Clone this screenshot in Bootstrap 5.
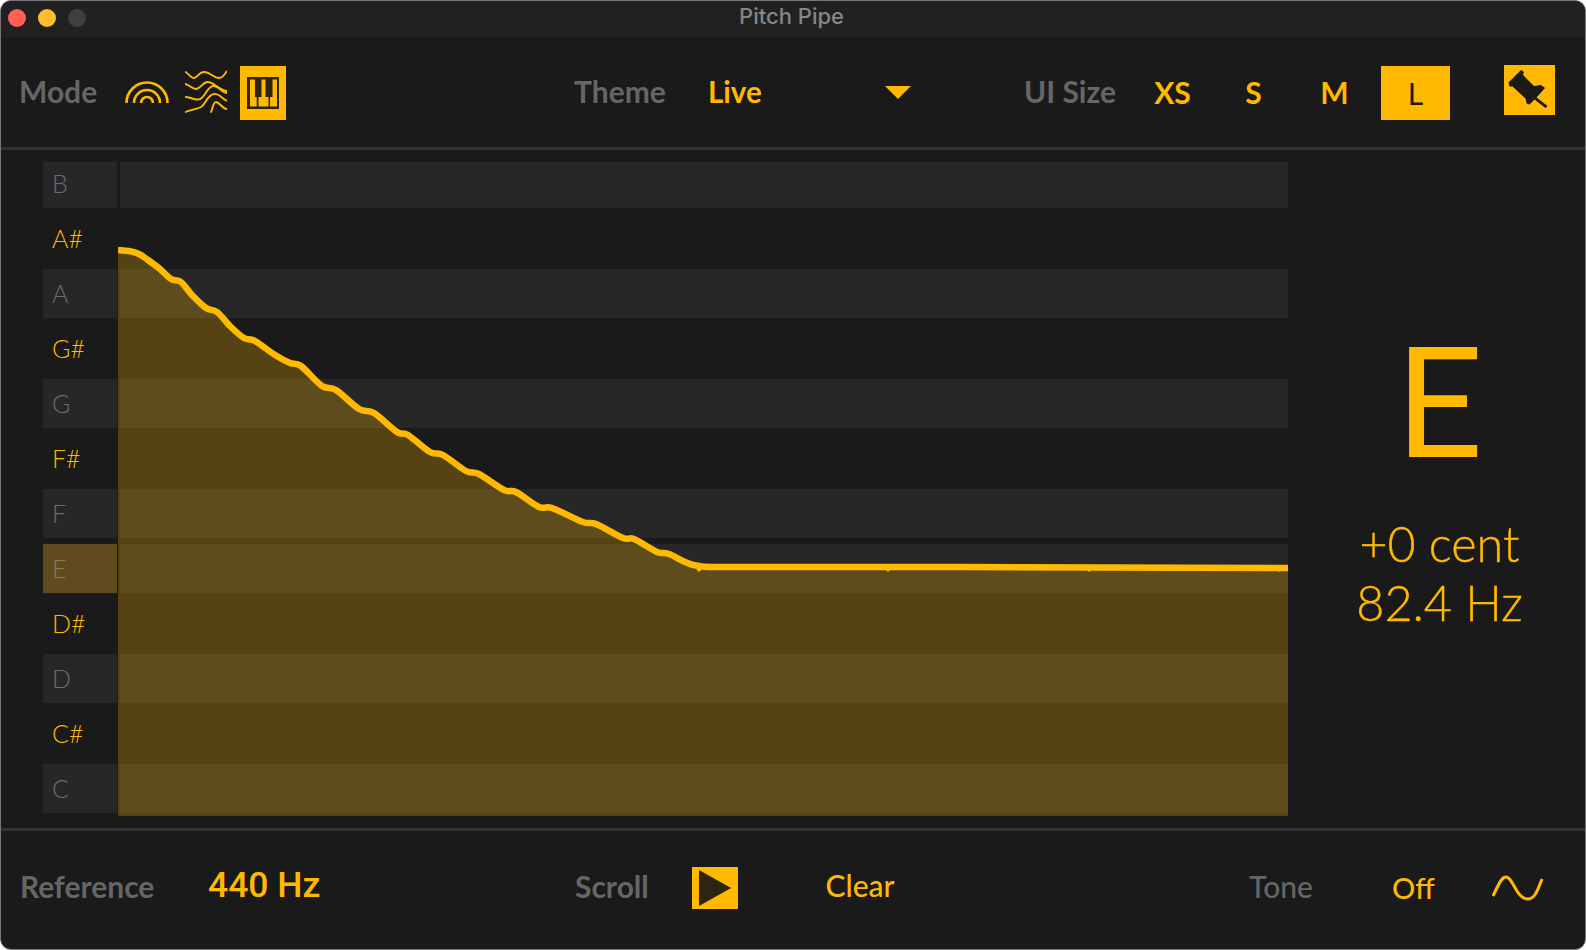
<!DOCTYPE html>
<html lang="en">
<head>
  <meta charset="UTF-8">
  <title>Pitch Pipe</title>
  <link href="https://cdn.jsdelivr.net/npm/bootstrap@5.3.3/dist/css/bootstrap.min.css" rel="stylesheet">
  <style>
    html, body { height: 100%; background: #fff; }
    body { font-family: "Lato", "Liberation Sans", sans-serif; overflow: hidden; }

    .pipe-window { height: 950px; background: #1a1a1a; border: 1px solid #777; border-radius: 11px; overflow: hidden; }

    .title-bar { height: 36px; background: #212121; padding-bottom: 3px; }
    .title-side { flex: 1 1 0; padding-left: 7px; gap: 12px; }
    .light { width: 18px; height: 18px; border-radius: 50%; margin-top: 1px; }
    .light-red { background: #ff5f57; }
    .light-yellow { background: #febc2e; }
    .light-off { background: #3f3f3f; }
    .title-text { font-family: "Inter", "Liberation Sans", sans-serif; font-size: 22px; font-weight: 500; color: #868686; line-height: 1; padding-right: 3px; margin-bottom: 4px; }

    .tool-bar { height: 110px; padding-left: 18px; }
    .foot-bar { height: 118px; padding-left: 19px; padding-bottom: 4px; }
    .rule { height: 3px; background: #333; flex: none; }

    .field-name { font-size: 30px; font-weight: 700; color: #666; line-height: 1; white-space: nowrap; flex: none; }
    .amber-text { font-size: 30px; font-weight: 700; color: #ffb900; line-height: 1; white-space: nowrap; flex: none; }
    .tool-bar .field-name { margin-bottom: 2px; }
    .foot-bar .field-name { margin-bottom: 4px; }

    .group-mode { width: 555px; }
    .group-theme { width: 450px; }
    .name-mode { width: 106px; }
    .name-theme { width: 134px; }
    .name-size { width: 114px; }
    .live-value { width: 177px; font-size: 29.5px; }
    .wave-icon { margin-left: 16px; margin-right: 13px; }

    .tool-btn { --bs-btn-padding-x: 0; --bs-btn-padding-y: 0; --bs-btn-border-width: 0; --bs-btn-border-radius: 0; --bs-btn-color: #ffb900; --bs-btn-hover-color: #ffb900; font-family: inherit; font-size: 30px; font-weight: 700; line-height: 1; display: flex; align-items: center; justify-content: center; flex: none; }
    .tool-on { background: #ffb900; color: #1f1c14; }
    .tool-on:hover { background: #ffb900; color: #1f1c14; }
    .size-btn { width: 69px; height: 54px; margin-right: 12px; margin-top: 2px; padding-bottom: 2px; }
    .size-btn.tool-on { font-weight: 400; margin-right: 0; padding-bottom: 0; }
    .piano-btn { width: 46px; height: 54px; margin-top: 2px; }
    .pin-btn { width: 51px; height: 50px; margin-left: 54px; margin-bottom: 4px; }

    .chart-area { flex: 1 1 0; min-height: 0; }
    .chart-col { width: 1245px; margin-left: 42px; margin-top: 12px; height: 654px; flex: none; }
    .note-row { height: 61px; }
    .note-row.is-natural { height: 49px; }
    .note-row.is-top { height: 46px; }
    .note-row.is-top .note-name { padding-bottom: 3px; }
    .note-row.is-e { margin-top: 6px; }
    .note-name { width: 74px; padding-left: 9px; font-size: 25px; font-weight: 300; line-height: 1; color: #ffb900; display: flex; align-items: center; flex: none; }
    .note-band { flex: 1 1 0; margin-left: 3px; }
    .is-natural .note-name { background: #272727; color: #6c6c6c; }
    .is-natural .note-band { background: #272727; }
    .is-natural.is-current .note-name { background: #5f4b1e; color: #8a7a55; }
    .curve-layer { position: absolute; left: 75px; top: 0; }

    .read-col { flex: 1 1 0; padding-left: 6px; padding-top: 171px; color: #ffb900; }
    .big-note { font-size: 154px; font-weight: 400; line-height: 1; height: 154px; }
    .read-line { font-size: 48.5px; font-weight: 300; line-height: 59px; white-space: nowrap; -webkit-text-stroke: 0.4px #ffb900; }
    .read-first { margin-top: 39px; }

    .name-reference { width: 188px; }
    .ref-value { font-family: "Roboto", "Liberation Sans", sans-serif; font-size: 35.5px; font-weight: 500; width: 367px; margin-bottom: 5px; }
    .name-scroll { width: 117px; }
    .play-btn { width: 46px; height: 42px; }
    .clear-btn { margin-left: 89px; width: 66px; font-size: 30px; font-weight: 500; margin-bottom: 6px; }
    .group-scroll { width: 674px; }
    .name-tone { width: 143px; font-weight: 500; }
    .off-value { width: 100px; font-size: 29px; font-weight: 500; margin-bottom: 2px; }
  </style>
</head>
<body>

  <div class="pipe-window d-flex flex-column">

    <div class="title-bar d-flex align-items-center flex-none">
      <div class="title-side d-flex align-items-center">
        <span class="light light-red"></span>
        <span class="light light-yellow"></span>
        <span class="light light-off"></span>
      </div>
      <div class="title-text">Pitch Pipe</div>
      <div class="title-side"></div>
    </div>

    <div class="tool-bar d-flex align-items-center">
      <div class="group-mode d-flex align-items-center">
        <div class="field-name name-mode">Mode</div>
        <svg width="44" height="26" viewBox="125 80 44 26" fill="none" stroke="#ffb900" stroke-width="2.6">
          <path d="M126.500 104a20.500 20.500 0 0 1 41 0"/>
          <path d="M134 104a13 13 0 0 1 26 0"/>
          <path d="M141 104a6 6 0 0 1 12 0"/>
        </svg>
        <svg class="wave-icon" width="42" height="44" viewBox="184 71 42 44" fill="none" stroke="#ffb900" stroke-width="1.9" stroke-linecap="round">
          <path d="M184.500 73C188 75 190 79 193 79C196 79 198 73 203 73C209 73 213 79 218 79C222 79 224 75 225.500 72.500"/>
          <path d="M184.500 85C188 86 192 90 195 90C199 90 201 84 206 83C212 82 216 90 225.500 92"/>
          <path d="M184.500 98C189 98 195 102 199 100C204 98 206 88 212 87C217 86 220 93 225.500 94"/>
          <path d="M184.500 113C189 111 196 110 200 108C205 105 206 96 213 95C218 94 221 100 225.500 101.500"/>
          <path d="M210 113C212 109 212 103 215 103C218 103 221 109 225.500 110"/>
        </svg>
        <button type="button" class="btn tool-btn tool-on piano-btn" aria-label="Keyboard mode">
          <svg width="46" height="54" viewBox="240 66 46 54">
            <rect x="248" y="78" width="30" height="30" fill="#2b2511" stroke="#2b2511" stroke-width="2"/>
            <path fill="#ffb900" d="M250 79.500h5v17.500h1.700v9.500h-6.700zM261.500 79.500h4v17.500h3v9.500h-10v-9.500h3zM272.500 79.500h4.500v27h-7v-9.500h2.500z"/>
          </svg>
        </button>
      </div>
      <div class="group-theme d-flex align-items-center">
        <div class="field-name name-theme">Theme</div>
        <div class="amber-text live-value">Live</div>
        <svg width="26" height="13" viewBox="0 0 26 13"><path fill="#ffb900" d="M0 0h26L13 13z"/></svg>
      </div>
      <div class="d-flex align-items-center">
        <div class="field-name name-size">UI Size</div>
        <button type="button" class="btn tool-btn size-btn">XS</button>
        <button type="button" class="btn tool-btn size-btn">S</button>
        <button type="button" class="btn tool-btn size-btn">M</button>
        <button type="button" class="btn tool-btn tool-on size-btn">L</button>
        <button type="button" class="btn tool-btn tool-on pin-btn" aria-label="Pin window">
          <svg width="51" height="50" viewBox="1504 66 51 50">
            <path fill="#1c1a14" d="M1521 71l3 2-1 3 11 11 7-1 4 3-8.500 9.500 11 8.500-2 2-11-8.500-5 5-3-1-1-5-13-12-3 0-1-4z"/>
          </svg>
        </button>
      </div>
    </div>

    <div class="rule"></div>

    <div class="chart-area d-flex">
      <div class="chart-col position-relative">
        <div class="note-row is-natural is-top d-flex"><div class="note-name">B</div><div class="note-band"></div></div>
        <div class="note-row d-flex"><div class="note-name">A#</div><div class="note-band"></div></div>
        <div class="note-row is-natural d-flex"><div class="note-name">A</div><div class="note-band"></div></div>
        <div class="note-row d-flex"><div class="note-name">G#</div><div class="note-band"></div></div>
        <div class="note-row is-natural d-flex"><div class="note-name">G</div><div class="note-band"></div></div>
        <div class="note-row d-flex"><div class="note-name">F#</div><div class="note-band"></div></div>
        <div class="note-row is-natural d-flex"><div class="note-name">F</div><div class="note-band"></div></div>
        <div class="note-row is-natural is-e is-current d-flex"><div class="note-name">E</div><div class="note-band"></div></div>
        <div class="note-row d-flex"><div class="note-name">D#</div><div class="note-band"></div></div>
        <div class="note-row is-natural d-flex"><div class="note-name">D</div><div class="note-band"></div></div>
        <div class="note-row d-flex"><div class="note-name">C#</div><div class="note-band"></div></div>
        <div class="note-row is-natural d-flex"><div class="note-name">C</div><div class="note-band"></div></div>
        <svg class="curve-layer" width="1170" height="654" viewBox="118 162 1170 654">
          <path id="pitchFill" fill="#ffb900" fill-opacity="0.26"/>
          <path id="pitchLine" fill="none" stroke="#ffb900" stroke-width="6.500"/>
          <path fill="#ffb900" d="M696 569h6l-3 3zM885 569h6l-3 3zM1086 569h6l-3 3zM1276 569h6l-3 3z"/>
        </svg>
      </div>
      <div class="read-col text-center">
        <div class="big-note">E</div>
        <div class="read-line read-first">+0 cent</div>
        <div class="read-line">82.4 Hz</div>
      </div>
    </div>

    <div class="rule"></div>

    <div class="foot-bar d-flex align-items-center">
      <div class="field-name name-reference">Reference</div>
      <div class="amber-text ref-value">440 Hz</div>
      <div class="group-scroll d-flex align-items-center">
        <div class="field-name name-scroll">Scroll</div>
        <button type="button" class="btn tool-btn tool-on play-btn" aria-label="Scroll">
          <svg width="46" height="42" viewBox="692 867 46 42"><path fill="#2b2511" d="M699 870l32 18-32 18z"/></svg>
        </button>
        <button type="button" class="btn tool-btn clear-btn">Clear</button>
      </div>
      <div class="field-name name-tone">Tone</div>
      <div class="amber-text off-value">Off</div>
      <svg width="52" height="28" viewBox="1492 875 52 28" fill="none" stroke="#ffb900" stroke-width="3">
        <path d="M1493 897C1498 887 1501 878 1506 878C1513 878 1516 900 1528 900C1535 900 1538 890 1542 880"/>
      </svg>
    </div>

  </div>

  <script src="https://cdn.jsdelivr.net/npm/bootstrap@5.3.3/dist/js/bootstrap.bundle.min.js"></script>
  <script>
    // pitch trace in page pixels, smoothed below
    const trace = [
      [118,250],[129,251],[139,254],[148,260],[160,269],[171,279],[181,282],[192,295],[206,308],[217,312],
      [231,327],[244,338],[255,341],[275,355],[290,363],[301,366],[322,386],[336,390],[359,409],[374,413],
      [397,432],[408,435],[430,452],[443,455],[466,471],[479,474],[504,490],[516,492],[539,507],[552,508],
      [583,522],[596,524],[623,538],[634,539],[657,552],[669,554],[696,565.500],[740,567],[960,567],[1288,568]
    ]

    let d = 'M' + trace[0].join(' ')
    for (let i = 0; i < trace.length - 1; i++) {
      const p0 = trace[Math.max(i - 1, 0)]
      const p1 = trace[i]
      const p2 = trace[i + 1]
      const p3 = trace[Math.min(i + 2, trace.length - 1)]
      const c1 = [p1[0] + (p2[0] - p0[0]) / 6, p1[1] + (p2[1] - p0[1]) / 6]
      const c2 = [p2[0] - (p3[0] - p1[0]) / 6, p2[1] - (p3[1] - p1[1]) / 6]
      d += 'C' + c1.join(' ') + ' ' + c2.join(' ') + ' ' + p2.join(' ')
    }
    document.getElementById('pitchLine').setAttribute('d', d)
    document.getElementById('pitchFill').setAttribute('d', d + 'L1288 816L118 816Z')
  </script>

</body>
</html>
